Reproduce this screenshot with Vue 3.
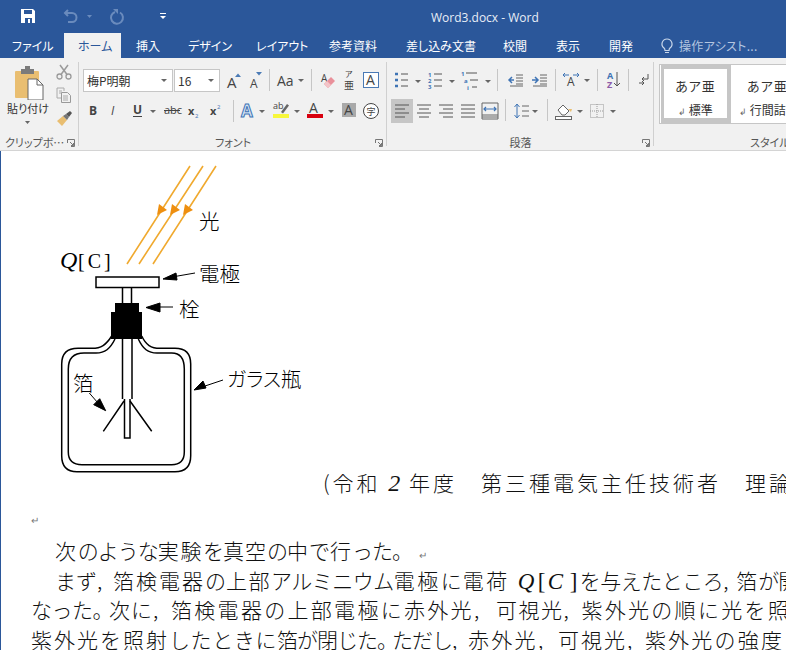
<template>
  <div class="word">
    <header class="titlebar">
      <div class="qat">
        <svg width="431" height="33" viewBox="0 0 431 33">
          <path d="M21 9h12l2 2v12H21z" fill="#fff" />
          <rect x="24" y="10" width="8" height="4" fill="#2b579a" />
          <rect x="25" y="18" width="7" height="5" fill="#2b579a" />
          <rect x="28" y="19" width="2" height="4" fill="#fff" />
          <path d="M68 10l-3 3 3 3M65 13h7a4.500 4.500 0 0 1 0 9h-4" fill="none" stroke="#6a8bbd" stroke-width="2" />
          <path d="M87 15h5l-2.500 3z" fill="#6a8bbd" />
          <path d="M115 12a6 6 0 1 0 5 .5" fill="none" stroke="#6a8bbd" stroke-width="2" />
          <path d="M113 9h5v5z" fill="#6a8bbd" />
          <rect x="160" y="13" width="6" height="1" fill="#fff" />
          <path d="M160 16h6l-3 3z" fill="#fff" />
        </svg>
      </div>
      <div class="doc-title">Word3.docx - Word</div>
    </header>

    <nav class="tabs">
      <div
        v-for="t in tabs"
        :key="t.label"
        class="tab"
        :class="{ active: t.active }"
        :style="{ width: t.w + 'px', paddingLeft: t.p + 'px' }"
      >
        {{ t.label }}
      </div>
      <div class="assist">
        <svg width="14" height="18" viewBox="0 0 14 18">
          <path d="M7 2a5 5 0 0 0-3 9c.8.7 1 1.500 1 2.500h4c0-1 .2-1.800 1-2.500a5 5 0 0 0-3-9zM5 15.500h4" fill="none" stroke="#c9d7ea" stroke-width="1.200" />
        </svg>
        <span>操作アシスト...</span>
      </div>
    </nav>

    <section class="ribbon">
      <div class="group clip">
        <div class="clip-body">
          <div class="paste">
            <svg class="paste-icon" width="34" height="34" viewBox="0 0 34 34">
              <rect x="2" y="5" width="24" height="27" rx="1" fill="#e9be71" />
              <rect x="8" y="3" width="13" height="5" fill="#7b7b7b" />
              <rect x="12" y="0" width="5" height="4" fill="#7b7b7b" />
              <path d="M15 13h9l6 6v15H15z" fill="#fff" stroke="#666" />
              <path d="M24 13v6h6" fill="none" stroke="#666" />
            </svg>
            <span class="paste-label">貼り付け</span>
            <svg width="8" height="6" viewBox="0 0 8 6"><path d="M1 1h5l-2.500 3z" fill="#666" /></svg>
          </div>
          <div class="clip-tools">
            <svg width="16" height="16" viewBox="0 0 16 16">
              <circle cx="3.500" cy="12.500" r="2.500" fill="none" stroke="#9a9a9a" stroke-width="1.300" />
              <circle cx="12.500" cy="12.500" r="2.500" fill="none" stroke="#9a9a9a" stroke-width="1.300" />
              <path d="M5 10.500L12 1M11 10.500L4 1" stroke="#9a9a9a" stroke-width="1.500" />
            </svg>
            <svg width="16" height="16" viewBox="0 0 16 16">
              <path d="M1 1h7v3M1 1v10h4" fill="none" stroke="#aaa" />
              <path d="M5.500 5.500h6l3 3v7h-9z" fill="#f1f1f1" stroke="#999" />
              <path d="M7 9h5M7 11h5M7 13h5M3 4h3M3 6h2" stroke="#aaa" />
            </svg>
            <svg width="17" height="16" viewBox="0 0 17 16">
              <path d="M1 11l6-5 4 4-5 6z" fill="#e9be71" />
              <path d="M7 6l3-2 3 3-2 3z" fill="#777" />
              <path d="M10 4l4-3 2 2-3 4z" fill="#555" />
            </svg>
          </div>
        </div>
        <div class="group-label label-clip">
          <span>クリップボ…</span>
          <svg class="launcher" width="8" height="8" viewBox="0 0 8 8"><path d="M.5 4V.5H7.500V7.500H4M3 3l3.500 3.500M6.500 4v2.500H4" fill="none" stroke="#777" /></svg>
        </div>
      </div>

      <div class="group font">
        <div class="rows">
          <div class="row row1">
            <div class="combo name"><span>梅P明朝</span><i class="caret"></i></div>
            <div class="combo size"><span>16</span><i class="caret"></i></div>
            <svg width="25" height="24" viewBox="220 0 25 24">
              <text x="227" y="19" class="ic-a" font-size="15">A</text>
              <path d="M235 8l3-3.500 3 3.500z" fill="#4a7ab5" />
            </svg>
            <svg width="24" height="24" viewBox="245 0 24 24">
              <text x="250" y="19" class="ic-a" font-size="12">A</text>
              <path d="M256 3h6l-3 3.500z" fill="#4a7ab5" />
            </svg>
            <span class="sep"></span>
            <svg width="41" height="24" viewBox="270 0 41 24">
              <text x="277" y="17" class="ic-a" font-size="14">Aa</text>
              <path d="M298 10h6l-3 3z" fill="#666" />
            </svg>
            <span class="sep"></span>
            <svg width="32" height="24" viewBox="312 0 32 24">
              <text x="321" y="13" class="ic-a" font-size="10" fill="#777">A</text>
              <path d="M324 15l7-7 4 4-7 7z" fill="#e9909a" />
              <path d="M324 15l3-3 4 4-3 3z" fill="#f3c4c8" />
            </svg>
            <svg width="15" height="24" viewBox="344 0 15 24">
              <text x="345" y="8" class="ic-cjk" font-size="8">ア</text>
              <text x="344" y="20" class="ic-cjk" font-size="10">亜</text>
            </svg>
            <svg width="27" height="24" viewBox="359 0 27 24">
              <rect x="363.500" y="3.500" width="15" height="15" fill="#fff" stroke="#4a7ab5" />
              <text x="366" y="16" class="ic-a" font-size="14">A</text>
            </svg>
          </div>
          <div class="row row2">
            <svg width="150" height="24" viewBox="83 0 150 24">
              <text x="89" y="16" class="ic-a bold" font-size="12">B</text>
              <text x="111" y="16" class="ic-a ital" font-size="12">I</text>
              <text x="133" y="15" class="ic-a bold" font-size="12">U</text>
              <rect x="133" y="17" width="9" height="1" fill="#444" />
              <path d="M150 11h6l-3 3z" fill="#666" />
              <text x="164" y="15" class="ic-a" font-size="11">abc</text>
              <rect x="164" y="11" width="16" height="1" fill="#444" />
              <text x="188" y="16" class="ic-a bold" font-size="11">x</text>
              <text x="195" y="19" class="ic-blue" font-size="6">2</text>
              <text x="210" y="16" class="ic-a bold" font-size="11">x</text>
              <text x="217" y="10" class="ic-blue" font-size="6">2</text>
            </svg>
            <span class="sep sep-b"></span>
            <svg width="32" height="24" viewBox="234 0 32 24">
              <text x="240" y="18" font-size="17" font-weight="700" font-family="Open Sans, sans-serif" fill="#d5e4f6" stroke="#3f74b5" stroke-width="1">A</text>
              <path d="M258 11h6l-3 3z" fill="#666" />
            </svg>
            <svg width="34" height="24" viewBox="266 0 34 24">
              <text x="272" y="10" class="ic-a" font-size="9">ab</text>
              <path d="M280 13l6-8 2 1.500-6 8z" fill="#666" />
              <rect x="272" y="15" width="16" height="4" fill="#f7f73b" />
              <path d="M293 11h6l-3 3z" fill="#666" />
            </svg>
            <svg width="34" height="24" viewBox="300 0 34 24">
              <text x="308" y="14" class="ic-a" font-size="14">A</text>
              <rect x="306" y="15" width="16" height="4" fill="#d8000f" />
              <path d="M327 11h6l-3 3z" fill="#666" />
            </svg>
            <svg width="50" height="24" viewBox="334 0 50 24">
              <rect x="341" y="4" width="14" height="14" fill="#a9a9a9" />
              <text x="343" y="16" class="ic-a" font-size="14">A</text>
              <circle cx="370" cy="12" r="7.500" fill="#fff" stroke="#444" />
              <text x="365.500" y="16" class="ic-cjk" font-size="9">字</text>
            </svg>
          </div>
        </div>
        <div class="group-label">
          <span>フォント</span>
          <svg class="launcher" width="8" height="8" viewBox="0 0 8 8"><path d="M.5 4V.5H7.500V7.500H4M3 3l3.500 3.500M6.500 4v2.500H4" fill="none" stroke="#777" /></svg>
        </div>
      </div>

      <div class="group para">
        <div class="rows">
          <div class="row row1">
            <svg width="100" height="24" viewBox="391 0 100 24">
              <path d="M395 5h3M395 11h3M395 17h3" stroke="#3f74b5" stroke-width="2.500" />
              <path d="M401 5h7M401 11h7M401 17h7" stroke="#555" />
              <path d="M415 11h6l-3 3z" fill="#666" />
              <text x="428" y="8" class="ic-blue bold" font-size="6">1</text>
              <text x="428" y="14" class="ic-blue bold" font-size="6">2</text>
              <text x="428" y="20" class="ic-blue bold" font-size="6">3</text>
              <path d="M434 5h8M434 11h8M434 17h8" stroke="#555" />
              <path d="M449 11h6l-3 3z" fill="#666" />
              <text x="461" y="7" class="ic-blue bold" font-size="6">1</text>
              <text x="464" y="14" class="ic-blue bold" font-size="6">a</text>
              <text x="467" y="21" class="ic-blue bold" font-size="6">i</text>
              <path d="M466 4h11M470 11h8M472 18h5" stroke="#555" />
              <path d="M485 11h6l-3 3z" fill="#666" />
            </svg>
            <span class="sep sep-c"></span>
            <svg width="50" height="24" viewBox="499 0 50 24">
              <path d="M503 11h5M506 8l-3 3 3 3" fill="none" stroke="#3f74b5" stroke-width="1.500" />
              <path d="M510 6h7M510 9h7M510 12h7M510 15h7M504 17h13" stroke="#666" />
              <path d="M526 11h5M529 8l3 3-3 3" fill="none" stroke="#3f74b5" stroke-width="1.500" />
              <path d="M534 6h7M534 9h7M534 12h7M534 15h7M527 17h14" stroke="#666" />
            </svg>
            <span class="sep sep-d"></span>
            <svg width="40" height="24" viewBox="551 0 40 24">
              <text x="561" y="17" class="ic-a" font-size="12">A</text>
              <path d="M557 6h6M573 6h-6M559 4l-2 2 2 2M571 4l2 2-2 2" fill="none" stroke="#3f74b5" />
              <path d="M578 10h6l-3 3z" fill="#666" />
            </svg>
            <span class="sep sep-e"></span>
            <svg width="26" height="24" viewBox="595 0 26 24">
              <text x="601" y="10" class="ic-blue bold" font-size="9">A</text>
              <text x="601" y="19" class="ic-violet bold" font-size="9">Z</text>
              <path d="M611 3v14M608 14l3 3 3-3" fill="none" stroke="#555" />
            </svg>
            <span class="sep sep-f"></span>
            <svg width="28" height="24" viewBox="625 0 28 24">
              <path d="M642 5v5h-6M638 8l-2 2 2 2" fill="none" stroke="#555" />
              <path d="M633 14h5M636 12l2 2-2 2" fill="none" stroke="#555" />
            </svg>
          </div>
          <div class="row row2">
            <svg class="on" width="22" height="24" viewBox="391 0 22 24">
              <path d="M395 6h14M395 10h10M395 14h14M395 18h10" stroke="#555" />
            </svg>
            <svg width="92" height="24" viewBox="413 0 92 24">
              <path d="M417 6h14M419 10h10M417 14h14M419 18h10" stroke="#555" />
              <path d="M439 6h14M443 10h10M439 14h14M443 18h10" stroke="#555" />
              <path d="M461 6h14M461 10h14M461 14h14M461 18h14" stroke="#555" />
              <path d="M482 4h16M482 20h16M482 4v16M498 4v16M482 16h16M482 18h16" fill="none" stroke="#666" />
              <path d="M484 10h12M486 8l-2 2 2 2M494 8l2 2-2 2" fill="none" stroke="#3f74b5" stroke-width="1.200" />
            </svg>
            <span class="sep sep-c2"></span>
            <svg width="40" height="24" viewBox="507 0 40 24">
              <path d="M517 6v12M514.500 8l2.500-3 2.500 3M514.500 16l2.500 3 2.500-3" fill="none" stroke="#3f74b5" />
              <path d="M522 7h7M522 12h7M522 17h7" stroke="#666" />
              <path d="M532 11h6l-3 3z" fill="#666" />
            </svg>
            <span class="sep sep-g"></span>
            <svg width="40" height="24" viewBox="549 0 40 24">
              <path d="M558 11l5-5 6 6-4 4h-3z" fill="#fff" stroke="#666" />
              <path d="M568 10l3 3 1-3z" fill="#e9be71" />
              <rect x="555.500" y="17.500" width="16" height="3" fill="#fff" stroke="#666" />
              <path d="M577 11h6l-3 3z" fill="#666" />
            </svg>
            <svg width="32" height="24" viewBox="589 0 32 24">
              <rect x="590.500" y="5.500" width="13" height="13" fill="none" stroke="#999" stroke-dasharray="1 1" />
              <path d="M597 5v13M590 12h13" stroke="#999" stroke-dasharray="1 1" />
              <path d="M610 11h6l-3 3z" fill="#666" />
            </svg>
          </div>
        </div>
        <div class="group-label">
          <span>段落</span>
          <svg class="launcher" width="8" height="8" viewBox="0 0 8 8"><path d="M.5 4V.5H7.500V7.500H4M3 3l3.500 3.500M6.500 4v2.500H4" fill="none" stroke="#777" /></svg>
        </div>
      </div>

      <div class="group styles">
        <div class="gallery">
          <div class="style-item current">
            <span class="sample">あア亜</span>
            <span class="style-name"><i>↲</i> 標準</span>
          </div>
          <div class="style-item second">
            <span class="sample">あア亜</span>
            <span class="style-name"><i>↲</i> 行間詰</span>
          </div>
        </div>
        <div class="group-label label-styles"><span>スタイル</span></div>
      </div>
    </section>

    <main class="page">
      <div class="figure-row">
        <svg class="figure" width="323" height="345" viewBox="0 152 323 345">
          <g stroke="#f0a92e" stroke-width="1.600">
            <path d="M190 167L127 265M203 167L139 265M216 167L153 265" />
          </g>
          <g fill="#ee8f10">
            <path d="M157 216l2-11 8 6zM170 216l2-11 8 6zM183 216l2-11 8 6z" />
          </g>
          <text x="199" y="230" class="fig-text">光</text>
          <text x="60" y="269" class="fig-q">Q</text>
          <text x="78" y="269" class="fig-c">[C]</text>

          <rect x="96" y="278" width="63" height="10.500" fill="#fff" stroke="#000" stroke-width="1.500" />
          <path d="M122.500 288v16M131.500 288v16" stroke="#000" stroke-width="1.500" fill="none" />
          <path d="M115 304h24v9h3v27h-31v-27h4z" fill="#000" />

          <g fill="none" stroke="#000" stroke-width="1.500">
            <path d="M111.700 337C106 346 101 349.300 92 349.300H78Q61.700 349.300 61.700 365V456.700Q61.700 472.700 77 472.700H175Q190.700 472.700 190.700 456.700V365Q190.700 349.300 175 349.300H160C151 349.300 146 346 141.700 337" />
            <path d="M115 340C110 350 105 354 96 354H84Q68.300 354 68.300 370V453Q68.300 465.700 82 465.700H171.700Q184.300 465.700 184.300 453V370Q184.300 354 171.700 354H157C148 354 143 350 138.300 340" />
            <path d="M122.500 340V400M132 340V400M124.500 400V439H130V400" />
            <path d="M124 402L103.300 432.300M130 402L151.700 432.300" />
          </g>

          <g stroke="#000" stroke-width="1" fill="#000">
            <path d="M195 274L172 278" />
            <path d="M163 280l13-6 1 7z" />
            <path d="M173 308H158" />
            <path d="M146 308.500l14-4.500v9z" />
            <path d="M223 381L205 387" />
            <path d="M194 391l9-9 3 7z" />
            <path d="M89.300 394L98 404" />
            <path d="M105.700 411.700l-12-6 6-6z" />
          </g>

          <text x="199" y="283" class="fig-text">電極</text>
          <text x="179" y="318" class="fig-text">栓</text>
          <text x="73" y="392" class="fig-text">箔</text>
          <text x="227" y="388" class="fig-text narrow">ガラス瓶</text>
        </svg>
        <p class="source">(令和 <em>2</em> 年度　第三種電気主任技術者　理論</p>
      </div>

      <p class="mark">↵</p>
      <p v-for="(line, i) in lines" :key="i" class="line" :class="{ first: i < 2 }">
        <span
          v-for="(s, j) in line"
          :key="j"
          :class="{ box: s.w, math: s.m, ital: s.i }"
          :style="s.w ? { width: s.w + 'px' } : { letterSpacing: (s.p - 21).toFixed(1) + 'px' }"
        >{{ s.t }}</span>
        <small v-if="i === 0">↵</small>
      </p>
    </main>
  </div>
</template>

<script setup>
const tabs = [
  { label: 'ファイル', w: 64, p: 12 },
  { label: 'ホーム', w: 57, p: 14, active: true },
  { label: '挿入', w: 52, p: 15 },
  { label: 'デザイン', w: 68, p: 15 },
  { label: 'レイアウト', w: 73, p: 15 },
  { label: '参考資料', w: 77, p: 15 },
  { label: '差し込み文書', w: 97, p: 15 },
  { label: '校閲', w: 53, p: 15 },
  { label: '表示', w: 53, p: 15 },
  { label: '開発', w: 53, p: 15 },
]

// p = pitch of one character, w = fixed width of a box (commas, math)
const lines = [
  [
    { t: '次', p: 22.7 }, { t: 'のような', p: 20 }, { t: '実験', p: 22.7 }, { t: 'を', p: 20 },
    { t: '真空', p: 22 }, { t: 'の', p: 20 }, { t: '中', p: 22 }, { t: 'で', p: 21 },
    { t: '行', p: 22 }, { t: 'った。', p: 20 },
  ],
  [
    { t: 'まず', p: 21 }, { t: ',', w: 16 }, { t: '箔検電器', p: 23 }, { t: 'の', p: 21 },
    { t: '上部', p: 22.5 }, { t: 'アルミニウム', p: 20.5 }, { t: '電極', p: 23.5 }, { t: 'に', p: 22 },
    { t: '電荷', p: 23.5 }, { t: ' ', w: 8 },
    { t: 'Q', w: 20, m: true, i: true }, { t: '[', w: 10, m: true },
    { t: 'C', w: 22, m: true, i: true }, { t: ']', w: 10, m: true },
    { t: 'を与えたところ', p: 20.5 }, { t: ',', w: 13 }, { t: '箔', p: 22 }, { t: 'が', p: 20 }, { t: '開', p: 21 },
  ],
  [
    { t: 'なった', p: 20.5 }, { t: '。', w: 16.5 }, { t: '次に', p: 22 }, { t: ',', w: 18 },
    { t: '箔検電器の上部電極に赤外光', p: 23.3 }, { t: ',', w: 22 }, { t: '可視光', p: 22.5 }, { t: ',', w: 18 },
    { t: '紫外光の順に光を照', p: 23.3 },
  ],
  [
    { t: '紫外光を照射', p: 23 }, { t: 'したときに', p: 21.6 }, { t: '箔が閉じた', p: 20 }, { t: '。', w: 15 },
    { t: 'ただし', p: 20 }, { t: ',', w: 16 }, { t: '赤外光', p: 23.3 }, { t: ',', w: 20 },
    { t: '可視光', p: 23 }, { t: ',', w: 18 }, { t: '紫外光の強度', p: 23.2 },
  ],
]
</script>

<style>
html, body {
  margin: 0;
  background: #fff;
}
</style>

<style scoped>
.word {
  width: 786px;
  height: 650px;
  overflow: hidden;
  font-family: "Noto Sans CJK JP", "Noto Sans", sans-serif;
  font-feature-settings: "palt";
  background: #fff;
}

.titlebar {
  display: flex;
  height: 33px;
  background: #2b579a;
  color: #fff;
}
.qat {
  width: 431px;
  height: 33px;
}
.qat svg {
  display: block;
}
.doc-title {
  font-family: "Open Sans", sans-serif;
  font-size: 12px;
  line-height: 36px;
  color: #e8eef7;
}

.tabs {
  display: flex;
  height: 25px;
  background: #2b579a;
}
.tab {
  box-sizing: border-box;
  font-size: 12px;
  line-height: 25px;
  color: #fff;
  white-space: nowrap;
}
.tab.active {
  background: #f1f1f1;
  color: #2b579a;
}
.assist {
  display: flex;
  align-items: center;
  gap: 5px;
  font-size: 12px;
  letter-spacing: 0.3px;
  color: #b4c6e0;
  margin-left: 13px;
  white-space: nowrap;
}

.ribbon {
  display: flex;
  height: 92px;
  background: #f1f1f1;
  border-bottom: 1px solid #d4d4d4;
}
.group {
  position: relative;
  box-sizing: border-box;
  height: 92px;
}
.group::after {
  content: "";
  position: absolute;
  right: 0;
  top: 4px;
  bottom: 4px;
  width: 1px;
  background: #d0d0d0;
}
.clip { width: 79px; }
.font { width: 308px; padding-left: 4px; }
.para { width: 267px; padding-left: 4px; }
.styles { width: 132px; padding-left: 5px; }
.styles::after { display: none; }

.clip-body {
  display: flex;
  height: 70px;
}
.paste {
  display: flex;
  flex-direction: column;
  align-items: center;
  width: 56px;
  padding-top: 8px;
  box-sizing: border-box;
}
.paste svg { display: block; }
.paste-icon { margin-left: 3px; }
.paste-label {
  font-size: 11px;
  line-height: 14px;
  margin-top: 1px;
  margin-bottom: 5px;
  color: #333;
  white-space: nowrap;
}
.clip-tools {
  display: flex;
  flex-direction: column;
  gap: 7px;
  padding-top: 6px;
}
.clip-tools svg { display: block; }

.group-label {
  position: absolute;
  left: 0;
  right: 0;
  bottom: 0;
  height: 16px;
  font-size: 11px;
  line-height: 16px;
  text-align: center;
  color: #555;
  white-space: nowrap;
}
.label-clip {
  text-align: left;
  padding-left: 5px;
}
.label-styles {
  text-align: left;
  padding-left: 96px;
}
.launcher {
  position: absolute;
  right: 4px;
  top: 5px;
}

.rows {
  display: flex;
  flex-direction: column;
  padding-top: 11px;
  gap: 6px;
}
.row {
  display: flex;
  height: 24px;
}
.row svg { display: block; flex: none; }
.row2 .on { background: #c6c6c6; }

.combo {
  box-sizing: border-box;
  display: flex;
  align-items: center;
  justify-content: space-between;
  height: 23px;
  padding: 0 5px 0 3px;
  background: #fff;
  border: 1px solid #c6c6c6;
  font-size: 12px;
  color: #333;
}
.name { width: 90px; margin-right: 1px; }
.size { width: 46px; }
.caret {
  width: 0;
  height: 0;
  border-left: 3px solid transparent;
  border-right: 3px solid transparent;
  border-top: 3px solid #666;
}
.sep {
  flex: none;
  width: 1px;
  height: 22px;
  background: #c6c6c6;
}
.sep-b { margin: 1px 1px 0 0; }
.sep-c { margin: 0 7px 0 6px; }
.sep-c2 { margin: 0 1px 0 0; }
.sep-d { margin: 0 1px 0 0; }
.sep-e { margin: 0 3px 0 0; }
.sep-f { margin: 0 2px 0 1px; }
.sep-g { margin: 0 1px 0 0; }

.ic-a {
  font-family: "Open Sans", sans-serif;
  fill: #444;
}
.bold { font-weight: 700; }
.ital { font-style: italic; }
.ic-blue {
  font-family: "Open Sans", sans-serif;
  fill: #3f74b5;
}
.ic-violet {
  font-family: "Open Sans", sans-serif;
  fill: #8c5ca8;
}
.ic-cjk {
  font-family: "Noto Sans CJK JP", sans-serif;
  fill: #444;
}

.gallery {
  display: flex;
  height: 58px;
  margin-top: 6px;
  border: 1px solid #c6c6c6;
  border-right: none;
  background: #fff;
  overflow: hidden;
}
.style-item {
  flex: none;
  box-sizing: border-box;
  width: 70px;
  display: flex;
  flex-direction: column;
  align-items: center;
  color: #333;
}
.current {
  margin-left: 1px;
  height: 58px;
  border-style: solid;
  border-color: #c6c6c6;
  border-width: 4px 4px 5px 3px;
  padding-top: 6px;
}
.second {
  align-items: flex-start;
  width: 60px;
  padding: 10px 0 0 8px;
}
.second .sample { margin-left: 8px; }
.sample {
  font-size: 13px;
  line-height: 22px;
  letter-spacing: 1px;
  white-space: nowrap;
}
.style-name {
  font-size: 12px;
  line-height: 18px;
  margin-top: 4px;
  white-space: nowrap;
}
.style-name i {
  font-style: normal;
  font-size: 9px;
  color: #666;
}

.page {
  box-sizing: border-box;
  height: 499px;
  border-left: 1px solid #2b579a;
  white-space: nowrap;
  overflow: hidden;
  color: #111;
}
.figure-row {
  display: flex;
  align-items: flex-end;
  height: 348px;
  margin-left: -1px;
}
.figure { flex: none; display: block; align-self: flex-start; }
.fig-text {
  font-family: "Noto Sans CJK JP", sans-serif;
  font-size: 20.500px;
  font-weight: 300;
  fill: #000;
}
.narrow { font-size: 20px; }
.fig-q {
  font-family: "Liberation Serif", serif;
  font-style: italic;
  font-size: 24px;
}
.fig-c {
  font-family: "Liberation Serif", serif;
  font-size: 20px;
  letter-spacing: 3px;
}
.source {
  margin: 0 0 2px;
  font-size: 21px;
  line-height: 30px;
  letter-spacing: 3px;
  font-weight: 300;
}
.source em {
  font-family: "Liberation Serif", serif;
  font-style: italic;
  font-size: 24px;
  line-height: 20px;
  letter-spacing: 1px;
}
.mark {
  margin: 14px 0 0 30px;
  font-size: 10px;
  line-height: 14px;
  color: #777;
}
.line {
  margin: 0;
  padding-left: 30px;
  height: 29.500px;
  font-size: 21px;
  line-height: 29.500px;
  font-weight: 300;
  font-feature-settings: normal;
}
.first {
  padding-left: 54px;
}
.mark + .first {
  margin-top: 9px;
}
.box {
  display: inline-block;
  vertical-align: baseline;
  white-space: pre;
}
.math {
  font-family: "Liberation Serif", serif;
  font-size: 23px;
  line-height: 20px;
}
.line small {
  font-size: 10px;
  line-height: 10px;
  color: #777;
  margin-left: 7px;
}
</style>
